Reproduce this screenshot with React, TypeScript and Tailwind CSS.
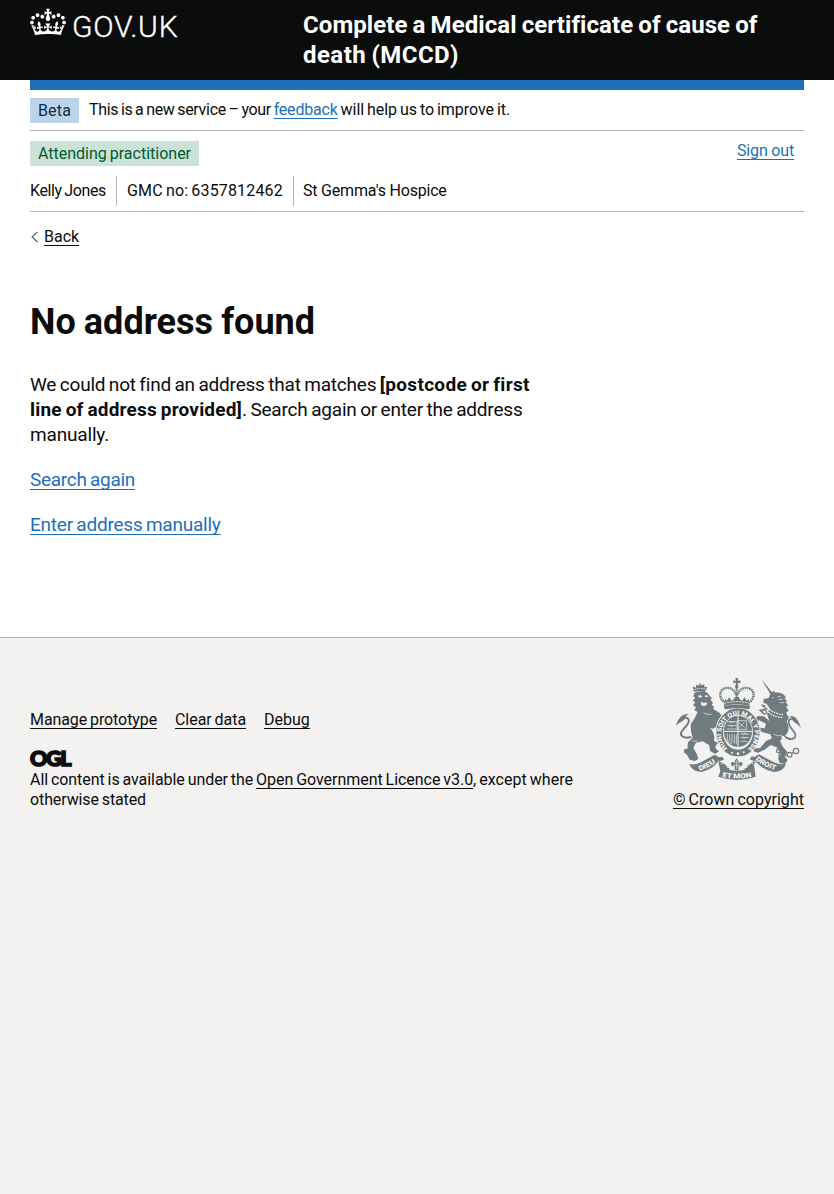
import type { ReactNode } from 'react';

function Crown() {
  return (
    <svg aria-hidden="true" className="h-8 w-9 shrink-0" viewBox="0 0 132 97" fill="currentColor" fillRule="evenodd">
      <path d="M25 30.2c3.5 1.5 7.7-.2 9.1-3.7 1.5-3.6-.2-7.8-3.9-9.2-3.6-1.4-7.6.3-9.1 3.9-1.4 3.5.3 7.5 3.9 9zM9 39.5c3.6 1.5 7.8-.2 9.2-3.7 1.5-3.6-.2-7.8-3.9-9.1-3.6-1.5-7.6.2-9.1 3.8-1.4 3.5.3 7.5 3.8 9zM4.4 57.2c3.5 1.5 7.7-.2 9.1-3.8 1.5-3.6-.2-7.7-3.9-9.1-3.5-1.5-7.6.3-9.1 3.8-1.4 3.5.3 7.6 3.9 9.1zm38.3-21.4c3.5 1.5 7.7-.2 9.1-3.8 1.5-3.6-.2-7.7-3.9-9.1-3.6-1.5-7.6.3-9.1 3.8-1.3 3.6.4 7.7 3.9 9.1zm64.4-5.6c-3.6 1.5-7.8-.2-9.1-3.7-1.5-3.6.2-7.8 3.8-9.2 3.6-1.4 7.7.3 9.2 3.9 1.3 3.5-.4 7.5-3.9 9zm15.9 9.3c-3.6 1.5-7.7-.2-9.1-3.7-1.5-3.6.2-7.8 3.7-9.1 3.6-1.5 7.7.2 9.2 3.8 1.5 3.5-.3 7.5-3.8 9zm4.7 17.7c-3.6 1.5-7.8-.2-9.2-3.8-1.5-3.6.2-7.7 3.9-9.1 3.6-1.5 7.7.3 9.2 3.8 1.3 3.5-.4 7.6-3.9 9.1zM89.3 35.8c-3.6 1.5-7.8-.2-9.2-3.8-1.4-3.6.2-7.7 3.9-9.1 3.6-1.5 7.7.3 9.2 3.8 1.4 3.6-.3 7.7-3.9 9.1zM69.7 17.7l8.9 4.7V9.3l-8.9 2.8c-.2-.3-.5-.6-.9-.9L72.4 0H59.6l3.5 11.2c-.3.3-.6.5-.9.9l-8.8-2.8v13.1l8.8-4.7c.3.3.6.7.9.9l-5 15.4v.1c-.2.8-.4 1.6-.4 2.4 0 4.1 3.1 7.5 7 8.1h.2c.3 0 .7.1 1 .1.4 0 .7 0 1-.1h.2c4-.6 7.1-4.1 7.1-8.1 0-.8-.1-1.7-.4-2.4V34l-5.1-15.4c.4-.2.7-.6 1-.9zM66 92.8c16.9 0 32.8 1.1 47.1 3.2 4-16.9 8.9-26.7 14-33.5l-9.6-3.4c1 4.9 1.1 7.2 0 10.2-1.5-1.4-3-4.3-4.2-8.7L108.6 76c2.8-2 5-3.2 7.5-3.3-4.4 9.4-10 11.9-13.6 11.2-4.3-.8-6.3-4.6-5.6-7.9 1-4.7 5.7-5.9 8-.5 4.3-8.7-3-11.4-7.6-8.8 7.1-7.2 7.9-13.5 2.1-21.1-8 6.1-8.1 12.3-4.5 20.8-4.7-5.4-12.1-2.5-9.5 6.2 3.4-5.2 7.9-2 7.2 3.1-.6 4.3-6.4 7.8-13.5 7.2-10.3-.9-10.9-8-11.2-13.8 2.5-.5 7.1 1.8 11 7.3L80.2 60c-4.1 4.4-8 5.3-12.3 5.4 1.4-4.4 8-11.6 8-11.6H55.5s6.4 7.2 7.9 11.6c-4.2-.1-8-1-12.3-5.4l1.4 16.4c3.9-5.5 8.5-7.7 10.9-7.3-.3 5.8-.9 12.8-11.1 13.8-7.2.6-12.9-2.9-13.5-7.2-.7-5 3.8-8.3 7.1-3.1 2.7-8.7-4.6-11.6-9.4-6.2 3.7-8.5 3.6-14.7-4.6-20.8-5.8 7.6-5 13.9 2.2 21.1-4.7-2.6-11.9.1-7.7 8.8 2.3-5.5 7.1-4.2 8.1.5.7 3.3-1.3 7.1-5.7 7.9-3.5.7-9-1.8-13.5-11.2 2.5.1 4.7 1.3 7.5 3.3l-4.7-15.4c-1.2 4.4-2.7 7.2-4.3 8.7-1.1-3-.9-5.3 0-10.2l-9.5 3.4c5 6.9 9.9 16.7 14 33.5 14.8-2.1 30.8-3.2 47.7-3.2z" />
    </svg>
  );
}

function RoyalArms() {
  const bg = '#f3f2f1';
  return (
    <svg aria-hidden="true" className="h-[102px] w-[125px] overflow-visible" viewBox="36 24 375 306" fill="#6f7b7f" stroke="none">
      <defs>
        <path id="garter" d="M190 235A50 56 0 1 1 254 235" />
        <path id="ribbon-left" d="M106 302Q139 293 162 271" />
        <path id="ribbon-mid" d="M174 321Q219 331 267 320" />
        <path id="ribbon-right" d="M274 269Q298 291 338 302" />
      </defs>

      {/* crown */}
      <path d="M214 24h9l-2 9 8-2v9l-8-2 2 10h-9l2-10-8 2v-9l8 2z" />
      <circle cx="218" cy="52" r="5" />
      <g fill="none" stroke="#6f7b7f">
        <path d="M184 99C166 87 163 64 180 56C195 49 213 58 216 76" strokeWidth="7" strokeDasharray="5 2" />
        <path d="M254 99C272 87 274 64 257 56C242 49 223 58 220 76" strokeWidth="7" strokeDasharray="5 2" />
        <path d="M218 58v28" strokeWidth="6" strokeDasharray="5 2" />
      </g>
      <path d="M180 108l3-22 6 6 7-11 6 11 6-3 5-8h11l5 8 6 3 6-11 7 11 6-6 3 22q-38-10-77 0z" />
      <path d="M181 100q38-10 76 0" fill="none" stroke={bg} strokeWidth="3" strokeDasharray="6 3" />
      <path d="M180 109q38-10 78 0l-3 9q-36-9-72 0z" />

      {/* lion */}
      <path d="M90 65l-4-16 9 4 2-9 8 3 2-9 5 8 9-3 0 9 9-2-7 17q-16-6-33-2z" />
      <path d="M91 59q15-6 32-2" fill="none" stroke={bg} strokeWidth="3" strokeDasharray="4 3" />
      <path d="M91 69C103 63 119 63 130 68L138 79L143 84L140 90L147 98L143 104L151 111L147 116L166 128L173 136L161 154L158 172L146 176L137 173C146 181 150 190 151 202L150 213L164 220C154 224 148 236 165 243L154 252L139 244L135 225L116 214L96 218L88 233L98 251L103 267L92 273L77 269L69 254L59 247L62 236L70 238L72 217L86 203L81 184L80 163L92 145L101 126L91 121L96 112L87 106L94 97L86 91L94 84L88 79z" />
      <path d="M101 78l8-3 6 5-7 3zm21-1l7-2 4 5-8 2zm-10 17l6 5 9-2 3 6-9 6-10-4z" fill={bg} />
      <path d="M118 128q10 8 24 5M151 172l7 8m-74 30q7 7 17 3" fill="none" stroke={bg} strokeWidth="2" />
      <path d="M82 201C53 208 43 193 58 178C72 163 83 147 66 143C57 141 55 151 42 153" fill="none" stroke="#6f7b7f" strokeWidth="6" />
      <path d="M36 169C41 143 57 130 74 132C64 137 67 143 60 150C52 157 44 157 36 169z" />

      {/* unicorn */}
      <path d="M293 29L326 69L320 75z" />
      <path d="M300 51l5-2m1 9l5-3m0 10l5-3" stroke={bg} strokeWidth="2" />
      <path d="M318 75L329 62L334 68C350 65 361 73 367 84L360 83L370 94L364 95L373 107L366 109L374 122L366 128L375 143L368 154C379 174 373 190 360 200L348 213L357 231L371 247L361 259L371 270L363 282L347 279L342 265L351 253L338 232L320 225L302 239L282 248L269 244L270 235L288 235L306 213L324 205L319 193L294 186L282 178L288 173L302 175L306 161L286 151L276 157L271 146L282 138L300 139L316 153L309 132L317 115L308 102L298 98L299 87L314 84z" />
      <circle cx="326" cy="83" r="2" fill={bg} />
      <path d="M309 113q24 20 50 21m-46-8q20 17 43 16" fill="none" stroke={bg} strokeWidth="4" strokeDasharray="5 3" />
      <path d="M304 107L293 105L308 117L288 121L301 132" fill="none" stroke="#6f7b7f" strokeWidth="4" />
      <path d="M340 81l11-3m-8 11l14-2m-10 11l14 0M330 193q9 7 24 3" fill="none" stroke={bg} strokeWidth="2" />
      <path d="M360 198C385 218 404 201 389 184C375 169 369 153 379 147C387 143 392 157 403 158" fill="none" stroke="#6f7b7f" strokeWidth="5" />
      <path d="M376 139C393 135 402 148 411 174C401 160 391 160 386 149C384 144 382 142 376 139z" />
      <g fill="none" stroke="#6f7b7f" strokeWidth="3.5">
        <circle cx="301" cy="126" r="6" />
        <circle cx="364" cy="181" r="5" />
        <circle cx="344" cy="242" r="6" />
        <circle cx="351" cy="257" r="6" />
        <circle cx="377" cy="254" r="7" />
        <circle cx="396" cy="243" r="8" />
        <path d="M383 250l6-4M361 258l9-2" />
      </g>
      <circle cx="357" cy="202" r="5" fill={bg} />

      {/* garter and shield */}
      <ellipse cx="222" cy="187" rx="68" ry="74" fill={bg} />
      <ellipse cx="222" cy="187" rx="55" ry="62" fill="none" stroke="#6f7b7f" strokeWidth="20" />
      <path d="M180 109q38-10 78 0l-3 9q-36-9-72 0z" />
      <text fill={bg} fontSize="20" fontWeight="900" fontFamily="Roboto, sans-serif">
        <textPath href="#garter" textLength="266" lengthAdjust="spacingAndGlyphs">HONI SOIT QUI MAL Y PENSE</textPath>
      </text>
      <ellipse cx="222" cy="184" rx="43" ry="47" />
      <g fill="none" stroke={bg} strokeWidth="2">
        <ellipse cx="222" cy="184" rx="43" ry="48" strokeDasharray="4 2" />
        <path d="M222 138v92M179 184h86" strokeWidth="3" />
        <path d="M190 155h28m-28 12h28m-28 10h28m-22-24l5 6 5-5 6 6m-15 5l5 5 5-4m12-14h29v26h-29zm5 5l18 16m0-16l-18 16M190 191v19q5 8 14 13m-7-31v22m7-22v27m7-26v28m6-28v30M230 192h27m-27 11h25m-25 11h20m-17-26l5 6 5-5 6 5m-14 6l5 5 6-4" />
      </g>
      <circle cx="204" cy="248" r="3" fill={bg} />
      <circle cx="222" cy="251" r="4" fill={bg} />
      <circle cx="239" cy="247" r="3" fill={bg} />

      {/* motto ribbon */}
      <path d="M75 281Q94 288 116 274L152 254L166 268Q151 297 112 306Q84 304 75 281z" />
      <path d="M366 281Q343 286 322 273L285 253L269 266Q290 298 330 306Q360 303 366 281z" />
      <path d="M163 273C178 279 192 286 193 294Q218 302 247 294C246 286 258 278 276 273L270 284L275 320Q219 340 163 320L169 304z" />
      <path d="M153 254l12 8 10-2 5 9-14 5zM285 253l-13 8-9-2-6 9 13 6z" />
      <path d="M192 294q-1-10-16-16l-5 5m76 11q2-9 16-16l5 4" fill="none" stroke={bg} strokeWidth="3" />
      <path d="M199 266h39l4 34q-23 4-46 0z" fill={bg} />
      <path d="M218 265l6 9-3 7q11-9 14-1c2 8-6 11-12 9l1 12h-12l1-12c-7 1-14-2-12-9 3-8 11-2 14 1l-3-7z" />
      <path d="M207 286h23M218 270v27" stroke={bg} strokeWidth="2" />
      <g fill={bg} fontFamily="Roboto, sans-serif" fontWeight="900" fontSize="21">
        <text><textPath href="#ribbon-left" textLength="56" lengthAdjust="spacingAndGlyphs">DIEU</textPath></text>
        <text><textPath href="#ribbon-mid" textLength="90" lengthAdjust="spacingAndGlyphs">ET MON</textPath></text>
        <text><textPath href="#ribbon-right" textLength="68" lengthAdjust="spacingAndGlyphs">DROIT</textPath></text>
      </g>
    </svg>
  );
}

function Link({ children, className = '' }: { children: ReactNode; className?: string }) {
  return (
    <a href="#" className={`whitespace-nowrap underline decoration-1 underline-offset-[3px] [text-decoration-skip-ink:none] ${className}`}>
      {children}
    </a>
  );
}

export default function App() {
  return (
    <div className="flex min-h-screen flex-col bg-white font-[Roboto,sans-serif] text-base/5 text-[#0b0c0c] [word-spacing:-1px]">
      <header className="bg-[#0b0c0c] px-[30px] text-white">
        <div className="flex h-20">
          <a href="#" className="flex w-[273px] shrink-0 pt-[6px]">
            <Crown />
            <span className="ml-[6px] text-[30px]/[41px] font-light tracking-[0.8px] [-webkit-text-stroke:0.35px_white]">GOV.UK</span>
          </a>
          <a href="#" className="pt-[10px] text-2xl/[30px] font-bold">
            <span className="block tracking-[0.08px]">Complete a Medical certificate of cause of</span>
            <span className="block tracking-[0.44px]">death (MCCD)</span>
          </a>
        </div>
      </header>

      <div className="px-[30px]">
        <div className="h-[10px] bg-[#1d70b8]" />
        <div className="flex items-start border-b border-[#b1b4b6] pt-2 pb-[7px]">
          <strong className="mr-[10px] flex h-[25px] w-[49px] items-center justify-center bg-[#bbd4ea] font-normal tracking-[0.15px] text-[#0c2d4a]">
            Beta
          </strong>
          <p className="mt-[2px] whitespace-pre">
            <span className="tracking-[-0.31px]">This is a new service – your </span>
            <Link className="tracking-[-0.19px] text-[#1d70b8]">feedback</Link>
            <span className="tracking-[-0.04px]"> will help us to improve it.</span>
          </p>
        </div>

        <div className="flex justify-between border-b border-[#b1b4b6] pt-[10px] pb-[5px]">
          <div>
            <strong className="flex h-[25px] w-[169px] items-center justify-center bg-[#cce2d8] font-normal text-[#005a30]">
              Attending practitioner
            </strong>
            <ul className="mt-[10px] flex h-[30px] items-center leading-[30px]">
              <li className="w-[87px] border-r border-[#b1b4b6] tracking-[-0.38px]">Kelly Jones</li>
              <li className="w-[177px] border-r border-[#b1b4b6] pl-[10px] tracking-[0.16px]">GMC no: 6357812462</li>
              <li className="pl-[9px] tracking-[-0.2px] [word-spacing:0px]">St Gemma's Hospice</li>
            </ul>
          </div>
          <Link className="mr-[10px] h-5 tracking-[-0.12px] text-[#1d70b8] [word-spacing:-0.3px]">Sign out</Link>
        </div>

        <div className="mt-[15px] flex h-5 items-center">
          <svg aria-hidden="true" className="mr-[5px] h-3 w-[9px]" viewBox="0 0 9 12" fill="none" stroke="#505a5f" strokeWidth="1.1">
            <path d="M7.5 1L2 6l5.5 5" />
          </svg>
          <Link>Back</Link>
        </div>
      </div>

      <main className="px-[30px] pt-[55px] text-[19px]/[25px]">
        <h1 className="text-4xl/10 font-bold tracking-[0.04px]">No address found</h1>
        <p className="mt-[30px] whitespace-pre">
          <span className="tracking-[-0.2px]">We could not find an address that matches </span>
          <b className="tracking-[0.3px]">[postcode or first</b>
          <br />
          <b className="tracking-[0.19px]">line of address provided]</b>
          <span className="tracking-[-0.19px]">. Search again or enter the address</span>
          <br />
          <span className="tracking-[-0.17px]">manually.</span>
        </p>
        <p className="mt-5">
          <Link className="tracking-[-0.29px] text-[#1d70b8]">Search again</Link>
        </p>
        <p className="mt-5">
          <Link className="tracking-[-0.23px] text-[#1d70b8]">Enter address manually</Link>
        </p>
      </main>

      <footer className="mt-[100px] flex grow items-start justify-between border-t border-[#b1b4b6] bg-[#f3f2f1] px-[30px] pt-10">
        <div className="pt-8">
          <ul className="flex gap-[18px]">
            <li className="w-[127px]"><Link className="tracking-[-0.09px]">Manage prototype</Link></li>
            <li className="w-[71px]"><Link className="tracking-[-0.05px]">Clear data</Link></li>
            <li><Link>Debug</Link></li>
          </ul>
          <div className="mt-5 h-[17px] font-[Lato,sans-serif] text-[21.5px]/[17px] font-black tracking-[-1.4px] [-webkit-text-stroke:1.6px_#0b0c0c]">
            OGL
          </div>
          <p className="mt-[3px] whitespace-pre">
            <span className="tracking-[-0.06px]">All content is available under the </span>
            <Link className="tracking-[-0.04px]">Open Government Licence v3.0</Link>
            <span className="tracking-[0.03px]">, except where</span>
            <br />
            <span className="tracking-[-0.11px]">otherwise stated</span>
          </p>
        </div>
        <div className="flex flex-col items-end">
          <div className="mr-[3px]"><RoyalArms /></div>
          <Link className="mt-[10px] tracking-[0.03px]">© Crown copyright</Link>
        </div>
      </footer>
    </div>
  );
}
